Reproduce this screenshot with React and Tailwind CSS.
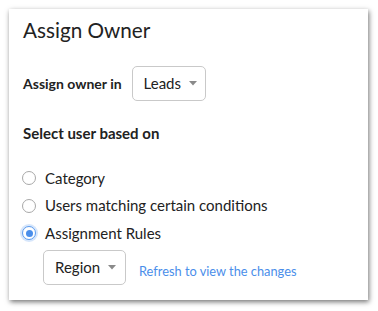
import React from "react";

function Caret() {
  return (
    <svg width="8" height="5" viewBox="0 0 8 5" className="ml-[8px] shrink-0">
      <path d="M0 0 L8 0 L4 4.5 Z" fill="#8a8a8a" />
    </svg>
  );
}

function Radio({ checked }) {
  return checked ? (
    <span className="shrink-0 w-[14px] h-[14px] rounded-full border border-[#5b9bef] bg-white flex items-center justify-center shadow-[0_0_0_2px_rgba(91,155,239,0.25)]">
      <span className="w-[7px] h-[7px] rounded-full bg-[#4a8eea]" />
    </span>
  ) : (
    <span className="shrink-0 block w-[14px] h-[14px] rounded-full border border-[#a8a8a8] bg-white" />
  );
}

export default function App() {
  return (
    <div className="w-[378px] h-[311px] bg-white pt-[9px] pl-[9px] font-['Lato',sans-serif] text-[#222]">
      <div className="w-[359px] h-[291px] bg-white shadow-[1px_2px_5px_rgba(0,0,0,0.55)] px-[14px] pt-[9px] flex flex-col">
        <div className="text-[20.7px] leading-[24px]">Assign Owner</div>
        <div className="flex items-center mt-[24px]">
          <span className="text-[14px] font-bold">Assign owner in</span>
          <div className="ml-[10px] h-[35px] w-[74px] border border-[#c9c9c9] rounded-[5px] flex items-center pl-[11px] text-[15px]">
            Leads
            <Caret />
          </div>
        </div>
        <div className="text-[15px] font-bold mt-[23px] leading-[18px]">Select user based on</div>
        <div className="flex flex-col mt-[27px] gap-[9.5px] text-[15px]">
          <div className="flex items-center h-[18px]">
            <span className="ml-[-1px] shrink-0"><Radio /></span>
            <span className="ml-[9px]">Category</span>
          </div>
          <div className="flex items-center h-[18px]">
            <span className="ml-[-1px] shrink-0"><Radio /></span>
            <span className="ml-[9px]">Users matching certain conditions</span>
          </div>
          <div className="flex items-center h-[18px]">
            <span className="ml-[-1px] shrink-0"><Radio checked /></span>
            <span className="ml-[9px]">Assignment Rules</span>
          </div>
        </div>
        <div className="flex items-center mt-[8px] ml-[20px]">
          <div className="h-[35px] w-[83px] border border-[#c9c9c9] rounded-[5px] flex items-center pl-[11px] text-[15px]">
            Region
            <Caret />
          </div>
          <span className="ml-[13px] mt-[9px] text-[12.8px] text-[#4a8eea]">Refresh to view the changes</span>
        </div>
      </div>
    </div>
  );
}
